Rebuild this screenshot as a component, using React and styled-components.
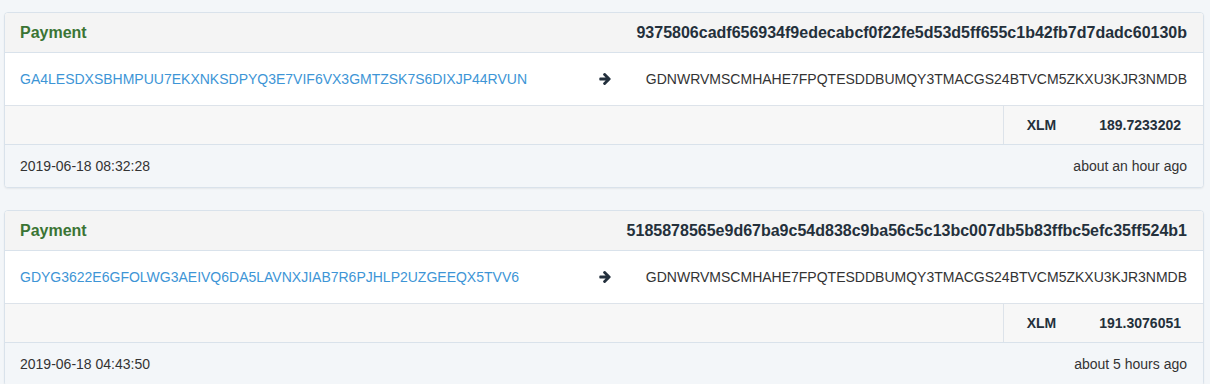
import React from 'react'
import styled, { createGlobalStyle } from 'styled-components'

const payments = [
  {
    hash: '9375806cadf656934f9edecabcf0f22fe5d53d5ff655c1b42fb7d7dadc60130b',
    from: 'GA4LESDXSBHMPUU7EKXNKSDPYQ3E7VIF6VX3GMTZSK7S6DIXJP44RVUN',
    to: 'GDNWRVMSCMHAHE7FPQTESDDBUMQY3TMACGS24BTVCM5ZKXU3KJR3NMDB',
    asset: 'XLM',
    amount: '189.7233202',
    date: '2019-06-18 08:32:28',
    ago: 'about an hour ago',
  },
  {
    hash: '5185878565e9d67ba9c54d838c9ba56c5c13bc007db5b83ffbc5efc35ff524b1',
    from: 'GDYG3622E6GFOLWG3AEIVQ6DA5LAVNXJIAB7R6PJHLP2UZGEEQX5TVV6',
    to: 'GDNWRVMSCMHAHE7FPQTESDDBUMQY3TMACGS24BTVCM5ZKXU3KJR3NMDB',
    asset: 'XLM',
    amount: '191.3076051',
    date: '2019-06-18 04:43:50',
    ago: 'about 5 hours ago',
  },
]

// font-awesome 4 style arrow-right
const ArrowIcon = () => (
  <svg width="12" height="12" viewBox="128 181 1472 1558" fill="currentColor">
    <path d="M1600 960q0 54-37 91l-651 651q-39 37-91 37-51 0-90-37l-75-75q-38-38-38-91t38-91l293-293h-704q-52 0-84.5-37.5t-32.5-90.5v-128q0-53 32.5-90.5t84.5-37.5h704l-293-294q-38-36-38-90t38-90l75-75q38-38 90-38 53 0 91 38l651 651q37 35 37 90z" />
  </svg>
)

const App = () => {
  return (
    <>
      <GlobalStyle />
      <Page>
        {payments.map((p) => (
          <Card key={p.hash}>
            <Header>
              <Title>Payment</Title>
              <Hash>{p.hash}</Hash>
            </Header>
            <Transfer>
              <Account href="#">{p.from}</Account>
              <Arrow>
                <ArrowIcon />
              </Arrow>
              <Destination>{p.to}</Destination>
            </Transfer>
            <AmountRow>
              <AmountCell>{p.asset}</AmountCell>
              <AmountCell $value>{p.amount}</AmountCell>
            </AmountRow>
            <Footer>
              <span>{p.date}</span>
              <span>{p.ago}</span>
            </Footer>
          </Card>
        ))}
      </Page>
    </>
  )
}

const GlobalStyle = createGlobalStyle`
  body {
    margin: 0;
    background: #f3f6f9;
    font-family: "Liberation Sans", Arial, sans-serif;
    font-size: 14px;
    color: #333;
  }
`

const Page = styled.div`
  padding: 12px 6px 0 4px;
`

const Card = styled.div`
  background: #fff;
  border: 1px solid #d9e2eb;
  border-radius: 4px;
  box-shadow: 0 1px 2px rgba(0, 0, 0, 0.06);
  margin-bottom: 22px;
  overflow: hidden;
`

const Header = styled.div`
  display: flex;
  align-items: center;
  justify-content: space-between;
  height: 39px;
  padding: 0 16px 0 15px;
  background: #f4f4f4;
  border-bottom: 1px solid #d9e2eb;
  font-size: 16px;
  font-weight: bold;
`

const Title = styled.span`
  color: #3b7434;
`

const Hash = styled.span`
  color: #24303b;
`

const Transfer = styled.div`
  display: grid;
  grid-template-columns: 1fr auto 1fr;
  align-items: center;
  height: 52px;
  padding: 0 16px 0 15px;
  border-bottom: 1px solid #dde3ea;
  line-height: 20px;
`

const Account = styled.a`
  color: #3d95d6;
  text-decoration: none;
`

const Arrow = styled.span`
  display: flex;
  color: #23303d;
  padding-left: 2px;
`

const Destination = styled.span`
  justify-self: end;
  color: #333;
`

const AmountRow = styled.div`
  display: flex;
  justify-content: flex-end;
  height: 38px;
  background: #f7f7f7;
  border-bottom: 1px solid #d9e2eb;
`

const AmountCell = styled.div`
  display: flex;
  align-items: center;
  padding: ${({ $value }) => ($value ? '0 22px 0 43px' : '0 0 0 23px')};
  border-left: ${({ $value }) => ($value ? 'none' : '1px solid #dde3ea')};
  color: #24303b;
  font-weight: bold;
`

const Footer = styled.div`
  display: flex;
  align-items: center;
  justify-content: space-between;
  height: 42px;
  padding: 0 16px 0 15px;
  background: #f3f6f9;
  color: #333;
`

export default App
